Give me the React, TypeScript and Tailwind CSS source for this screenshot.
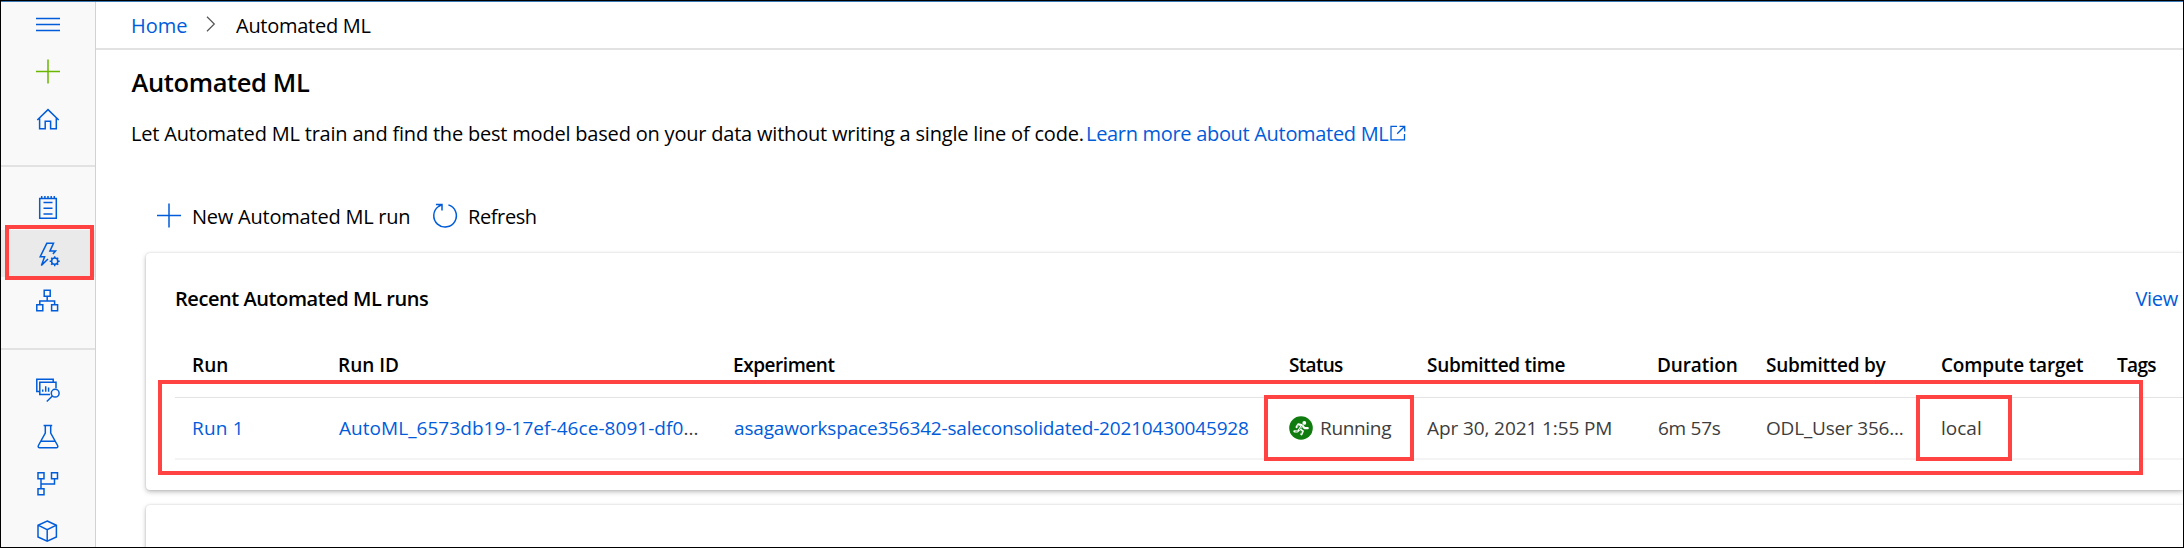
import React from "react";

const link = "text-[#015cda]";

function Icon({ children, className = "" }: { children: React.ReactNode; className?: string }) {
  return (
    <svg width="24" height="24" viewBox="0 0 24 24" fill="none" stroke="currentColor" strokeWidth="1.5" className={"block shrink-0 overflow-visible " + className}>
      {children}
    </svg>
  );
}

function NavItem({ children, active = false, className = "" }: { children: React.ReactNode; active?: boolean; className?: string }) {
  return (
    <div className={"flex h-[47px] w-full shrink-0 items-center justify-center " + (active ? "bg-[#eaeaea] " : "") + className}>
      <Icon>{children}</Icon>
    </div>
  );
}

function Sidebar() {
  return (
    <nav className={"flex w-[95px] shrink-0 flex-col overflow-hidden border-r border-[#d2d2d2] bg-[#f9f9f9] " + link}>
      <NavItem className="-mt-px">
        <path d="M0 5.5h24M0 11.5h24M0 17.5h24" />
      </NavItem>
      <NavItem className="text-[#6bb700]">
        <path d="M0 11.5h24M12 -.5v24" />
      </NavItem>
      <NavItem>
        <path d="M1.3 13 12 2.6 22.700 13M3.600 11.200v10.500h5.600v-7.400h5.400v7.400h5.700V11.200" />
      </NavItem>
      <div className="mt-[23px] mb-4 h-[2px] shrink-0 bg-[#e2e2e2]" />
      <NavItem>
        <path d="M3.7 3.500h16.600v19.800H3.700z" />
        <path d="M5.7 1.100v2.200M8.900 1.100v2.200M12 1.100v2.200M15.200 1.100v2.200M18.300 1.100v2.200M7.500 7.500h9M7.500 13.200h9M7.500 18.900h9" />
      </NavItem>
      <NavItem active>
        <path d="M12 17l-6.6 6.4 3.2-8.7H4.2L10.8 1.3h6.7l-3.6 7.8h5.6l-2.6 3" />
        <circle cx="18.7" cy="19.2" r="3.1" />
        <path d="M18.7 16.1v-1.9M18.7 24.2v-1.9M15.6 19.2h-1.9M23.7 19.2h-1.9M16.5 17l-1.3-1.3M22.2 22.7l-1.3-1.3M20.9 17l1.3-1.3M15.2 22.7l1.3-1.3" />
      </NavItem>
      <NavItem>
        <path d="M8.2 1.2h6v6h-6zM.8 15.800h6v6h-6zM15.600 15.800h6v6h-6zM11.200 7.200V12M3.800 15.800V12h14.800v3.800" />
      </NavItem>
      <div className="mt-6 mb-4 h-[2px] shrink-0 bg-[#e2e2e2]" />
      <NavItem>
        <path d="M3.5 13.4H.8V1.2h16.4v3M14 16.4H3.8V4.3H20v6" />
        <path d="M6.7 13.8v-2.2M9.7 13.8V8.2M12.6 13.8V9.6" />
        <circle cx="19.2" cy="15.2" r="3.9" />
        <path d="M16.4 18l-5.6 5.5" />
      </NavItem>
      <NavItem>
        <path d="M7.6.5h8.600M9.300.5v7.600L2.400 20.500c-.6 1.200 0 2.300 1.300 2.300h16.600c1.300 0 1.900-1.100 1.300-2.300L14.700 8.100V.5M5 16.300h14" />
      </NavItem>
      <NavItem>
        <path d="M2 .8h6v6H2zM15.500.8h6v6h-6zM2 16.700h6v6H2zM5 6.800v9.900M5 12h13.500V6.800" />
      </NavItem>
      <NavItem>
        <path d="M11.200 2l9.200 4.200v11.700l-9.200 4.200L2 17.900V6.200zM2 6.200l9.200 4.500 9.200-4.500M11.200 10.700v11.400" />
      </NavItem>
    </nav>
  );
}

function RunningIcon() {
  return (
    <svg width="24" height="24" viewBox="0 0 24 24" fill="none" className="block shrink-0">
      <circle cx="12" cy="12" r="11.8" fill="#107c10" />
      <circle cx="15.3" cy="6.9" r="1.9" fill="#fff" />
      <path
        d="M12.8 9.6l-2.6 4.2M12.600 9L9.300 8.300 7.600 11M13.800 10l1.700 2.200h3.200M10.200 13.800l-1.600 1.500H5.400M10.600 13.200l3.200 1.900-1.400 3.200"
        stroke="#fff"
        strokeWidth="2.2"
        strokeLinecap="round"
        strokeLinejoin="round"
      />
      <path d="M13.2 9.800l-2.800 4 2.500 1.800-.7 2M9.500 8.900l-1 1.600M8.800 14.900l-2.400.5" stroke="#107c10" strokeWidth="0.7" />
    </svg>
  );
}

const columns = "grid grid-cols-[146px_395px_555px_138px_231px_108px_175px_176px_66px] items-center pl-[17px] whitespace-nowrap text-[19px]";

export default function App() {
  return (
    <div className="relative flex h-[548px] w-[2184px] flex-col overflow-hidden border border-black bg-white font-['Open_Sans',sans-serif] text-[20px] text-black">
      <div className="h-px shrink-0 bg-[#3a78b5]" />
      <div className="flex min-h-0 flex-1">
        <Sidebar />
        <main className="flex min-w-0 flex-1 flex-col">
          <div className="flex h-12 shrink-0 items-center border-b-2 border-[#e2e2e2] pt-[2px] pl-[35px]">
            <a className={"w-[75px] " + link}>Home</a>
            <svg width="10" height="16" viewBox="0 0 10 16" fill="none" stroke="#555" strokeWidth="1.2" className="-mt-[5px] mr-[20px] block">
              <path d="M1 .8L8.3 8 1 15.2" />
            </svg>
            <span className="tracking-[-0.27px]">Automated ML</span>
          </div>

          <h1 className="flex h-16 shrink-0 items-center pl-[35.5px] text-[25.5px] font-semibold tracking-[-0.38px]">Automated ML</h1>

          <div className="flex h-[38px] shrink-0 items-center pt-[2px] pl-[35px] whitespace-nowrap">
            <span className="w-[955px] tracking-[-0.2px]">
              Let Automated ML train and find the best model based on your data without writing a single line of code.
            </span>
            <a className={"flex items-center tracking-[-0.31px] " + link}>
              <span className="w-[303.5px]">Learn more about Automated ML</span>
              <svg width="16" height="16" viewBox="0 0 16 16" fill="none" stroke="currentColor" strokeWidth="1.3" className="-mt-[2px] block">
                <path d="M7 1.300H1v13.500h13.500V9M9.500 1.300h5.200v5.200M14.700 1.300L7.200 8.800" />
              </svg>
            </a>
          </div>

          <div className="mt-7 flex h-[72px] shrink-0 items-center pl-[61px]">
            <Icon className={link}>
              <path d="M0 11.5h24M12 -.5v24" />
            </Icon>
            <span className="ml-[11px] w-[241px] pt-[2px] tracking-[-0.22px]">New Automated ML run</span>
            <Icon className={link}>
              <path d="M15.4.9A11.300 11.300 0 1 1 5.500 2.500L9 .7M2.900.6H9v6" />
            </Icon>
            <span className="ml-[11px] pt-[2px] tracking-[-0.4px]">Refresh</span>
          </div>

          <section className="mt-px ml-[50px] flex h-[237px] shrink-0 flex-col rounded-l-[4px] bg-white pl-[29px] shadow-[0_2px_5px_rgba(0,0,0,0.25),0_0_2px_rgba(0,0,0,0.16)]">
            <div className="mt-[25px] flex h-10 items-center justify-between pt-px pr-[5px]">
              <h2 className="font-semibold tracking-[-0.43px]">Recent Automated ML runs</h2>
              <a className={"tracking-[-0.3px] " + link}>View</a>
            </div>
            <div className={"mt-[15px] h-[65px] border-b border-[#e3e3e3] font-semibold " + columns}>
              <span>Run</span>
              <span>Run ID</span>
              <span className="tracking-[-0.45px]">Experiment</span>
              <span className="pl-px tracking-[-0.7px]">Status</span>
              <span className="pl-px tracking-[-0.3px]">Submitted time</span>
              <span className="tracking-[-0.13px]">Duration</span>
              <span className="pl-px tracking-[-0.25px]">Submitted by</span>
              <span className="pl-px tracking-[-0.17px]">Compute target</span>
              <span className="pl-px tracking-[-0.65px]">Tags</span>
            </div>
            <div className={"h-[62px] border-b-2 border-[#f4f4f4] text-[#3d3d3d] " + columns}>
              <a className={"tracking-[0.2px] " + link}>Run 1</a>
              <span className="pl-px tracking-[0.05px]">
                <a className={link}>AutoML_6573db19-17ef-46ce-8091-df0</a>...
              </span>
              <a className={"pl-px tracking-[-0.18px] " + link}>asagaworkspace356342-saleconsolidated-20210430045928</a>
              <span className="flex items-center gap-[7px] pl-px tracking-[-0.33px]">
                <RunningIcon />
                Running
              </span>
              <span className="pl-px tracking-[-0.1px]">Apr 30, 2021 1:55 PM</span>
              <span className="pl-px tracking-[-0.26px]">6m 57s</span>
              <span className="pl-px tracking-[-0.2px]">ODL_User 356...</span>
              <span className="pl-px">local</span>
            </div>
          </section>

          <section className="mt-[15px] ml-[50px] h-[60px] shrink-0 rounded-l-[4px] bg-white shadow-[0_2px_5px_rgba(0,0,0,0.25),0_0_2px_rgba(0,0,0,0.16)]" />
        </main>
      </div>

      <div className="absolute top-[224px] left-[4px] h-[55px] w-[89px] border-4 border-[#ff4343]" />
      <div className="absolute top-[379px] left-[157px] h-[95px] w-[1985px] border-4 border-[#ff4343]" />
      <div className="absolute top-[394px] left-[1263px] h-[66px] w-[150px] border-4 border-[#ff4343]" />
      <div className="absolute top-[394px] left-[1915px] h-[66px] w-[96px] border-4 border-[#ff4343]" />
    </div>
  );
}
